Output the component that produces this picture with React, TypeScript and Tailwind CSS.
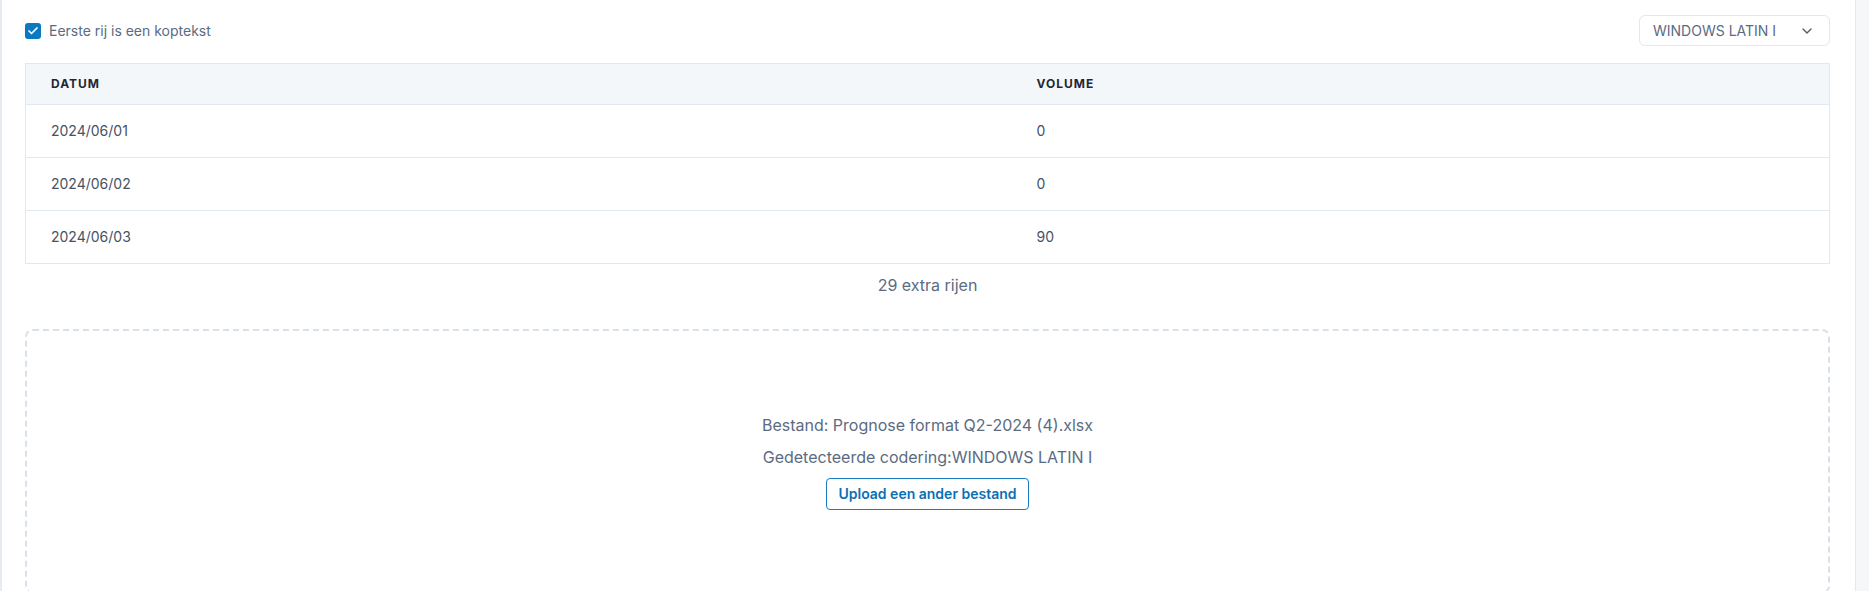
import { Check, ChevronDown } from 'lucide-react'

const rows = [
  { datum: '2024/06/01', volume: '0' },
  { datum: '2024/06/02', volume: '0' },
  { datum: '2024/06/03', volume: '90' },
]

export default function App() {
  return (
    <div className="flex min-h-[591px] bg-white font-['Inter',sans-serif] text-[#5b6b82]">
      {/* Main panel */}
      <div className="flex-1 border-l-2 border-[#e6ebf1] pl-[23px] pr-[25px] pt-[15px]">
        <div className="flex items-center justify-between">
          <label className="flex items-center gap-2 text-sm">
            <span className="flex h-4 w-4 items-center justify-center rounded-[3px] bg-[#0b78c2]">
              <Check className="h-3 w-3 text-white" strokeWidth={3.5} />
            </span>
            Eerste rij is een koptekst
          </label>
          <button className="flex h-[31px] w-[191px] items-center justify-between rounded-md border border-[#e2e8f0] bg-white pl-[13px] pr-[14px] text-sm text-[#5b6b82]">
            WINDOWS LATIN I
            <ChevronDown className="h-4 w-4 text-[#4b5a70]" strokeWidth={2} />
          </button>
        </div>

        {/* Preview table */}
        <table className="mt-[17px] w-full border-collapse border border-[#e2e8f0] text-sm">
          <thead>
            <tr className="h-[41px] bg-[#f4f7fa] text-left">
              <th className="w-[986px] border-b border-[#e2e8f0] pl-[25px] text-xs font-bold tracking-[1px] text-[#1f2733]">DATUM</th>
              <th className="border-b border-[#e2e8f0] pl-[25px] text-xs font-bold tracking-[1px] text-[#1f2733]">VOLUME</th>
            </tr>
          </thead>
          <tbody>
            {rows.map((r) => (
              <tr key={r.datum} className="h-[53px] border-b border-[#e2e8f0] text-[#475263]">
                <td className="pl-[25px]">{r.datum}</td>
                <td className="pl-[25px]">{r.volume}</td>
              </tr>
            ))}
          </tbody>
        </table>

        <p className="mt-[9px] text-center text-base leading-6">29 extra rijen</p>

        {/* Upload area */}
        <div className="mt-8 flex h-[265px] flex-col items-center justify-center rounded-lg border-2 border-dashed border-[#d8e0e9]">
          <p className="text-base leading-6">Bestand: Prognose format Q2-2024 (4).xlsx</p>
          <p className="mt-2 text-base leading-6">Gedetecteerde codering:WINDOWS LATIN I</p>
          <button className="mt-[9px] h-8 w-[203px] whitespace-nowrap rounded border border-[#1a7cc0] text-sm font-semibold text-[#0b6fb3]">
            Upload een ander bestand
          </button>
        </div>
      </div>

      {/* Side strip */}
      <div className="w-[14px] border-l border-[#e4e9ef] bg-[#f6f7f9]" />
    </div>
  )
}
